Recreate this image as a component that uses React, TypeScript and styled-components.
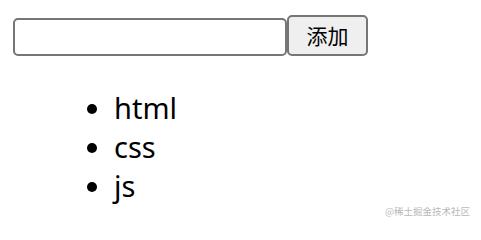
import React, { useState } from 'react'
import styled, { createGlobalStyle } from 'styled-components'

const GlobalStyle = createGlobalStyle`
    html, body {
        margin: 0;
        padding: 0;
        background: #ffffff;
    }
    body {
        font-family: "Noto Sans", "Noto Sans CJK SC", sans-serif;
        color: #000000;
    }
`

const Page = styled.div`
    position: relative;
    width: 481px;
    height: 223px;
    padding: 15px 0 0 13px;
    box-sizing: border-box;
    overflow: hidden;
`

const Form = styled.div`
    display: flex;
    align-items: flex-end;
`

const Input = styled.input`
    width: 274px;
    height: 38px;
    box-sizing: border-box;
    border: 2px solid #767676;
    border-radius: 5px;
    padding: 0 6px;
    font-size: 20px;
    outline: none;
`

const AddButton = styled.button`
    width: 81px;
    height: 41px;
    box-sizing: border-box;
    border: 2px solid #767676;
    border-radius: 5px;
    background: #efefef;
    font-family: "Noto Sans CJK SC", sans-serif;
    font-size: 21px;
    color: #000000;
    padding: 0;
    line-height: 1;
`

const List = styled.ul`
    margin: 32px 0 0;
    padding-left: 101px;
    list-style: disc;
`

const Item = styled.li`
    font-size: 29px;
    line-height: 39px;
`

const Watermark = styled.div`
    position: absolute;
    right: 11px;
    bottom: 5px;
    font-family: "Noto Sans CJK SC", sans-serif;
    font-size: 9.5px;
    color: #b8b8b8;
`

export default function App() {
    const [value, setValue] = useState('')
    const [items, setItems] = useState<string[]>(['html', 'css', 'js'])

    const add = () => {
        if (!value.trim()) return
        setItems([...items, value.trim()])
        setValue('')
    }

    return (
        <Page>
            <GlobalStyle/>
            <Form>
                <Input value={value} onChange={e => setValue(e.target.value)}/>
                <AddButton onClick={add}>添加</AddButton>
            </Form>
            <List>
                {items.map((item, i) => <Item key={i}>{item}</Item>)}
            </List>
            <Watermark>@稀土掘金技术社区</Watermark>
        </Page>
    )
}
